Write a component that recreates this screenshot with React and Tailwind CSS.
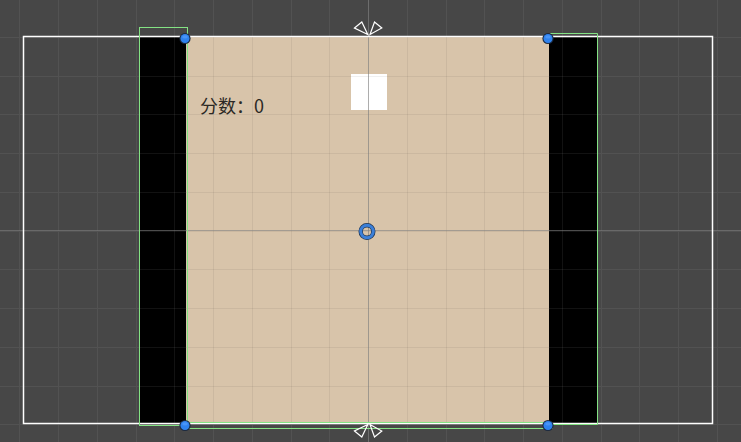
import React from 'react'

const STEP = 38.75
const gridX = Array.from({ length: 19 }, (_, i) => Math.round(19.25 + STEP * i) + 0.5)
const gridY = Array.from({ length: 12 }, (_, i) => Math.round(-2 + STEP * i) + 0.5)

const BEIGE = { x: 186, y: 37, w: 363, h: 386 }
const LEFT_BAR = { x: 140, y: 37, w: 46, h: 386 }
const RIGHT_BAR = { x: 549, y: 37, w: 48, h: 386 }

const GREEN = '#84e384'

const GridLines = ({ color }) => (
  <g stroke={color} strokeWidth="1">
    {gridX.map((x) => (
      <line key={'x' + x} x1={x} y1="0" x2={x} y2="442" />
    ))}
    {gridY.map((y) => (
      <line key={'y' + y} x1="0" y1={y} x2="741" y2={y} />
    ))}
  </g>
)

const Handle = ({ cx, cy }) => (
  <g>
    <circle cx={cx} cy={cy} r="5.6" fill="#1b2a40" />
    <circle cx={cx} cy={cy} r="4.5" fill="#2f82ee" />
    <ellipse cx={cx} cy={cy - 1.6} rx="2.8" ry="1.6" fill="#5aa2ff" opacity="0.6" />
  </g>
)

const Anchor = ({ flip }) => {
  // two outlined triangles pointing at the panel edge
  const s = flip ? -1 : 1
  const oy = flip ? 423 : 36
  const p = (pts) => pts.map(([x, y]) => `${x},${oy - s * y}`).join(' ')
  return (
    <g fill="none" stroke="#ffffff" strokeWidth="1.2" strokeLinejoin="miter">
      <polygon points={p([[354.5, 8], [361.8, 14], [367.8, 1.5]])} />
      <polygon points={p([[370, 1.5], [374.5, 14], [381.8, 8]])} />
    </g>
  )
}

export default function App() {
  return (
    <div className="relative w-[741px] h-[442px] overflow-hidden bg-[#474747]">
      {/* scene grid */}
      <svg className="absolute inset-0" width="741" height="442">
        <GridLines color="#525252" />
      </svg>

      {/* game view: letterbox bars + canvas */}
      <div className="absolute left-[140px] top-[37px] flex h-[386px]">
        <div className="w-[46px] bg-black" />
        <div className="flex w-[363px] items-start bg-[#d8c4aa] pl-[14px] pt-[37px]">
          <div className="mt-[22px] w-[151px] whitespace-nowrap text-[18px] leading-none text-[#2c2925] font-['Noto_Sans_CJK_SC','Noto_Sans',sans-serif]">
            分数：0
          </div>
          <div className="h-[36px] w-[36px] bg-white" />
        </div>
        <div className="w-[48px] bg-black" />
      </div>

      {/* gizmos */}
      <svg className="absolute inset-0" width="741" height="442">
        <defs>
          <clipPath id="beige">
            <rect x={BEIGE.x} y={BEIGE.y} width={BEIGE.w} height={BEIGE.h} />
          </clipPath>
          <clipPath id="bars">
            <rect x={LEFT_BAR.x} y={LEFT_BAR.y} width={LEFT_BAR.w} height={LEFT_BAR.h} />
            <rect x={RIGHT_BAR.x} y={RIGHT_BAR.y} width={RIGHT_BAR.w} height={RIGHT_BAR.h} />
          </clipPath>
        </defs>

        <g clipPath="url(#beige)">
          <GridLines color="rgba(0,0,0,0.06)" />
        </g>
        <g clipPath="url(#bars)">
          <GridLines color="rgba(255,255,255,0.07)" />
        </g>

        {/* axes */}
        <g stroke="rgba(128,128,128,0.6)" strokeWidth="1">
          <line x1="0" y1="230.5" x2="741" y2="230.5" />
          <line x1="368.5" y1="0" x2="368.5" y2="442" />
        </g>

        {/* camera frame */}
        <rect x="23.5" y="36.5" width="689" height="387" fill="none" stroke="#ffffff" strokeWidth="1.5" />

        {/* selection outlines */}
        <g fill="none" stroke={GREEN} strokeWidth="1">
          <rect x="139.5" y="27.5" width="48" height="398" />
          <path d="M550.5 37 V33.5 H597.5 V424.5 H550" />
          <line x1="187.5" y1="37" x2="187.5" y2="428.5" />
          <line x1="187" y1="422.5" x2="550" y2="422.5" />
          <line x1="187" y1="428.5" x2="553" y2="428.5" />
        </g>

        <Anchor />
        <Anchor flip />

        <Handle cx={185} cy={38.5} />
        <Handle cx={548} cy={38.5} />
        <Handle cx={185} cy={425.5} />
        <Handle cx={548} cy={425.5} />

        {/* pivot */}
        <circle cx="367" cy="231.5" r="6.3" fill="none" stroke="#1f3553" strokeWidth="4.4" />
        <circle cx="367" cy="231.5" r="6.3" fill="none" stroke="#3b7fd8" strokeWidth="3" />
      </svg>
    </div>
  )
}
